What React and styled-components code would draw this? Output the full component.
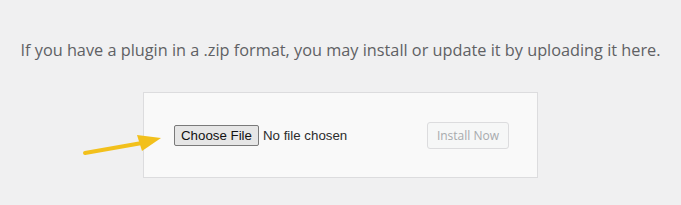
import React from "react"
import styled, { createGlobalStyle } from "styled-components"

const GlobalStyle = createGlobalStyle`
  html, body {
    margin: 0;
    padding: 0;
    background: #f0f0f1;
  }
  #root {
    width: 681px;
    height: 205px;
  }
`

const Page = styled.div`
  position: relative;
  width: 681px;
  height: 205px;
  overflow: hidden;
  display: flex;
  flex-direction: column;
  align-items: center;
  font-family: "Open Sans", "Noto Sans", sans-serif;
`

const Desc = styled.p`
  margin: 39px 0 0 0;
  font-size: 16.3px;
  line-height: 22px;
  color: #5f6164;
  white-space: nowrap;
`

const UploadBox = styled.form`
  box-sizing: border-box;
  margin-top: 31px;
  width: 395px;
  height: 86px;
  background: #f9f9f9;
  border: 1px solid #dcdcde;
  display: flex;
  align-items: center;
  justify-content: space-between;
  padding: 0 28px 0 30px;
`

const FileField = styled.label`
  display: flex;
  align-items: center;
  gap: 4px;
  cursor: pointer;
  font-family: "Liberation Sans", Arial, sans-serif;
  font-size: 13.3px;
  color: #1d1d1d;

  input {
    display: none;
  }
`

const PickButton = styled.span`
  box-sizing: border-box;
  height: 21px;
  padding: 0 6px;
  display: inline-flex;
  align-items: center;
  background: #e6e6e6;
  border: 1px solid #7a7a7a;
  border-radius: 2px;
  color: #111;
`

const FileName = styled.span`
  color: #2c2c2c;
`

const InstallButton = styled.button`
  box-sizing: border-box;
  height: 27px;
  padding: 0 9px;
  background: #f6f7f7;
  border: 1px solid #dcdcde;
  border-radius: 3px;
  font-family: "Open Sans", "Noto Sans", sans-serif;
  font-size: 12px;
  color: #a7aaad;
  cursor: default;
`

const Arrow = styled.svg`
  position: absolute;
  left: 80px;
  top: 130px;
  pointer-events: none;
`

export default function App() {
  return (
    <>
      <GlobalStyle />
      <Page>
        <Desc>If you have a plugin in a .zip format, you may install or update it by uploading it here.</Desc>
        <UploadBox onSubmit={(e) => e.preventDefault()}>
          <FileField>
            <input type="file" accept=".zip" />
            <PickButton>Choose File</PickButton>
            <FileName>No file chosen</FileName>
          </FileField>
          <InstallButton type="submit" disabled>Install Now</InstallButton>
        </UploadBox>
        <Arrow width="90" height="30" viewBox="0 0 90 30">
          <path d="M5 23 L62 13" stroke="#f2c01c" strokeWidth="4" strokeLinecap="round" fill="none" />
          <path d="M57 5 L81 8 L62 21 Z" fill="#f2c01c" />
        </Arrow>
      </Page>
    </>
  )
}
